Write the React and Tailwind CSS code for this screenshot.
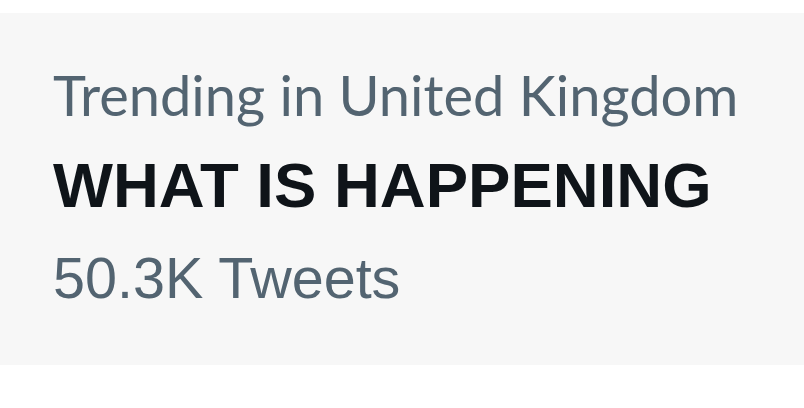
export default function App() {
  return (
    <div className="w-[804px] h-[408px] bg-white pt-[13px]">
      <div className="bg-[#f7f7f7] h-[352px] pl-[53px] pt-[37px] flex flex-col">
        <div className="font-['Lato','Noto_Sans',sans-serif] text-[56px] leading-[90px] text-[#536471] whitespace-nowrap">
          Trending in United Kingdom
        </div>
        <div className="font-['Liberation_Sans',Arial,sans-serif] text-[63.5px] leading-[90px] font-bold text-[#0f1419] whitespace-nowrap">
          WHAT IS HAPPENING
        </div>
        <div className="mt-[3px] font-['Liberation_Sans',Arial,sans-serif] text-[57.5px] leading-[90px] text-[#536471] whitespace-nowrap">
          50.3K Tweets
        </div>
      </div>
    </div>
  );
}
